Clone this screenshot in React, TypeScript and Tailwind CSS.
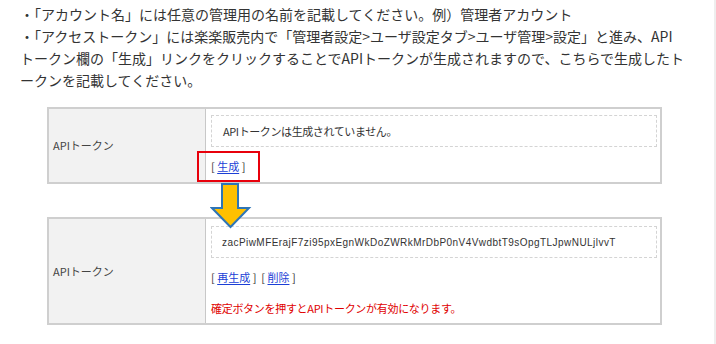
import React from "react";

const jp = { fontFamily: '"Noto Sans CJK JP", "Noto Sans", sans-serif' };

function Arrow() {
  return (
    <svg
      className="absolute left-[163px] top-[76px]"
      width="42"
      height="46"
      viewBox="0 0 42 46"
    >
      <path
        d="M12 1 H28 V25 H39 L20.5 44 L2 25 H12 Z"
        fill="#ffc000"
        stroke="#2e75b6"
        strokeWidth="2"
        strokeLinejoin="miter"
      />
    </svg>
  );
}

function Link({ children }: { children: React.ReactNode }) {
  return <span className="text-[#1b3fd6] underline underline-offset-2">{children}</span>;
}

export default function App() {
  return (
    <div className="relative w-[716px] h-[344px] bg-white overflow-hidden" style={jp}>
      <div className="absolute right-0 top-0 h-full w-[2px] bg-[#eeeeee]" />
      <div className="pl-[20px] pt-[3px] text-[14px] leading-[22px] text-[#333333] whitespace-nowrap">
        <div>・「アカウント名」には任意の管理用の名前を記載してください。例）管理者アカウント</div>
        <div>・「アクセストークン」には楽楽販売内で「管理者設定&gt;ユーザ設定タブ&gt;ユーザ管理&gt;設定」と進み、API</div>
        <div>トークン欄の「生成」リンクをクリックすることでAPIトークンが生成されますので、こちらで生成したト</div>
        <div>ークンを記載してください。</div>
      </div>

      <div className="relative ml-[47px] mt-[16px] w-[615px] text-[11px] text-[#444444]">
        {/* table 1 */}
        <div className="flex h-[77px] border-2 border-[#cfcfcf]">
          <div className="w-[157px] shrink-0 bg-[#f2f2f2] border-r border-[#c8c8c8] flex items-center pl-[4px]">
            APIトークン
          </div>
          <div className="flex-1 flex flex-col pt-[6px] pl-[5px] pr-[3px]">
            <div className="h-[32px] border border-dashed border-[#d4d4d4] flex items-center pl-[11px] tracking-[-0.4px] text-[#333333]">
              APIトークンは生成されていません。
            </div>
            <div className="relative mt-[11px] leading-[16px] text-[#333333]">
              <span className="absolute left-[-14px] top-[-7px] w-[63px] h-[31px] border-2 border-[#e8000b]" />
              [&nbsp;<Link>生成</Link>&nbsp;]
            </div>
          </div>
        </div>

        {/* table 2 */}
        <div className="flex h-[108px] mt-[33px] border-2 border-[#cfcfcf]">
          <div className="w-[157px] shrink-0 bg-[#f2f2f2] border-r border-[#c8c8c8] flex items-center pl-[4px]">
            APIトークン
          </div>
          <div className="flex-1 flex flex-col pt-[7px] pl-[5px] pr-[3px] text-[#333333]">
            <div
              className="h-[32px] border border-dashed border-[#d4d4d4] flex items-center pl-[10px] text-[10px] tracking-[0.45px]"
              style={{ fontFamily: '"Liberation Sans", Arial, sans-serif' }}
            >
              zacPiwMFErajF7zi95pxEgnWkDoZWRkMrDbP0nV4VwdbtT9sOpgTLJpwNULjlvvT
            </div>
            <div className="mt-[11px] leading-[16px]">
              [&nbsp;<Link>再生成</Link>&nbsp;]&nbsp;&nbsp;[&nbsp;<Link>削除</Link>&nbsp;]
            </div>
            <div className="mt-[15px] leading-[16px] text-[#e00000] tracking-[-0.3px]">
              確定ボタンを押すとAPIトークンが有効になります。
            </div>
          </div>
        </div>

        <Arrow />
      </div>
    </div>
  );
}
